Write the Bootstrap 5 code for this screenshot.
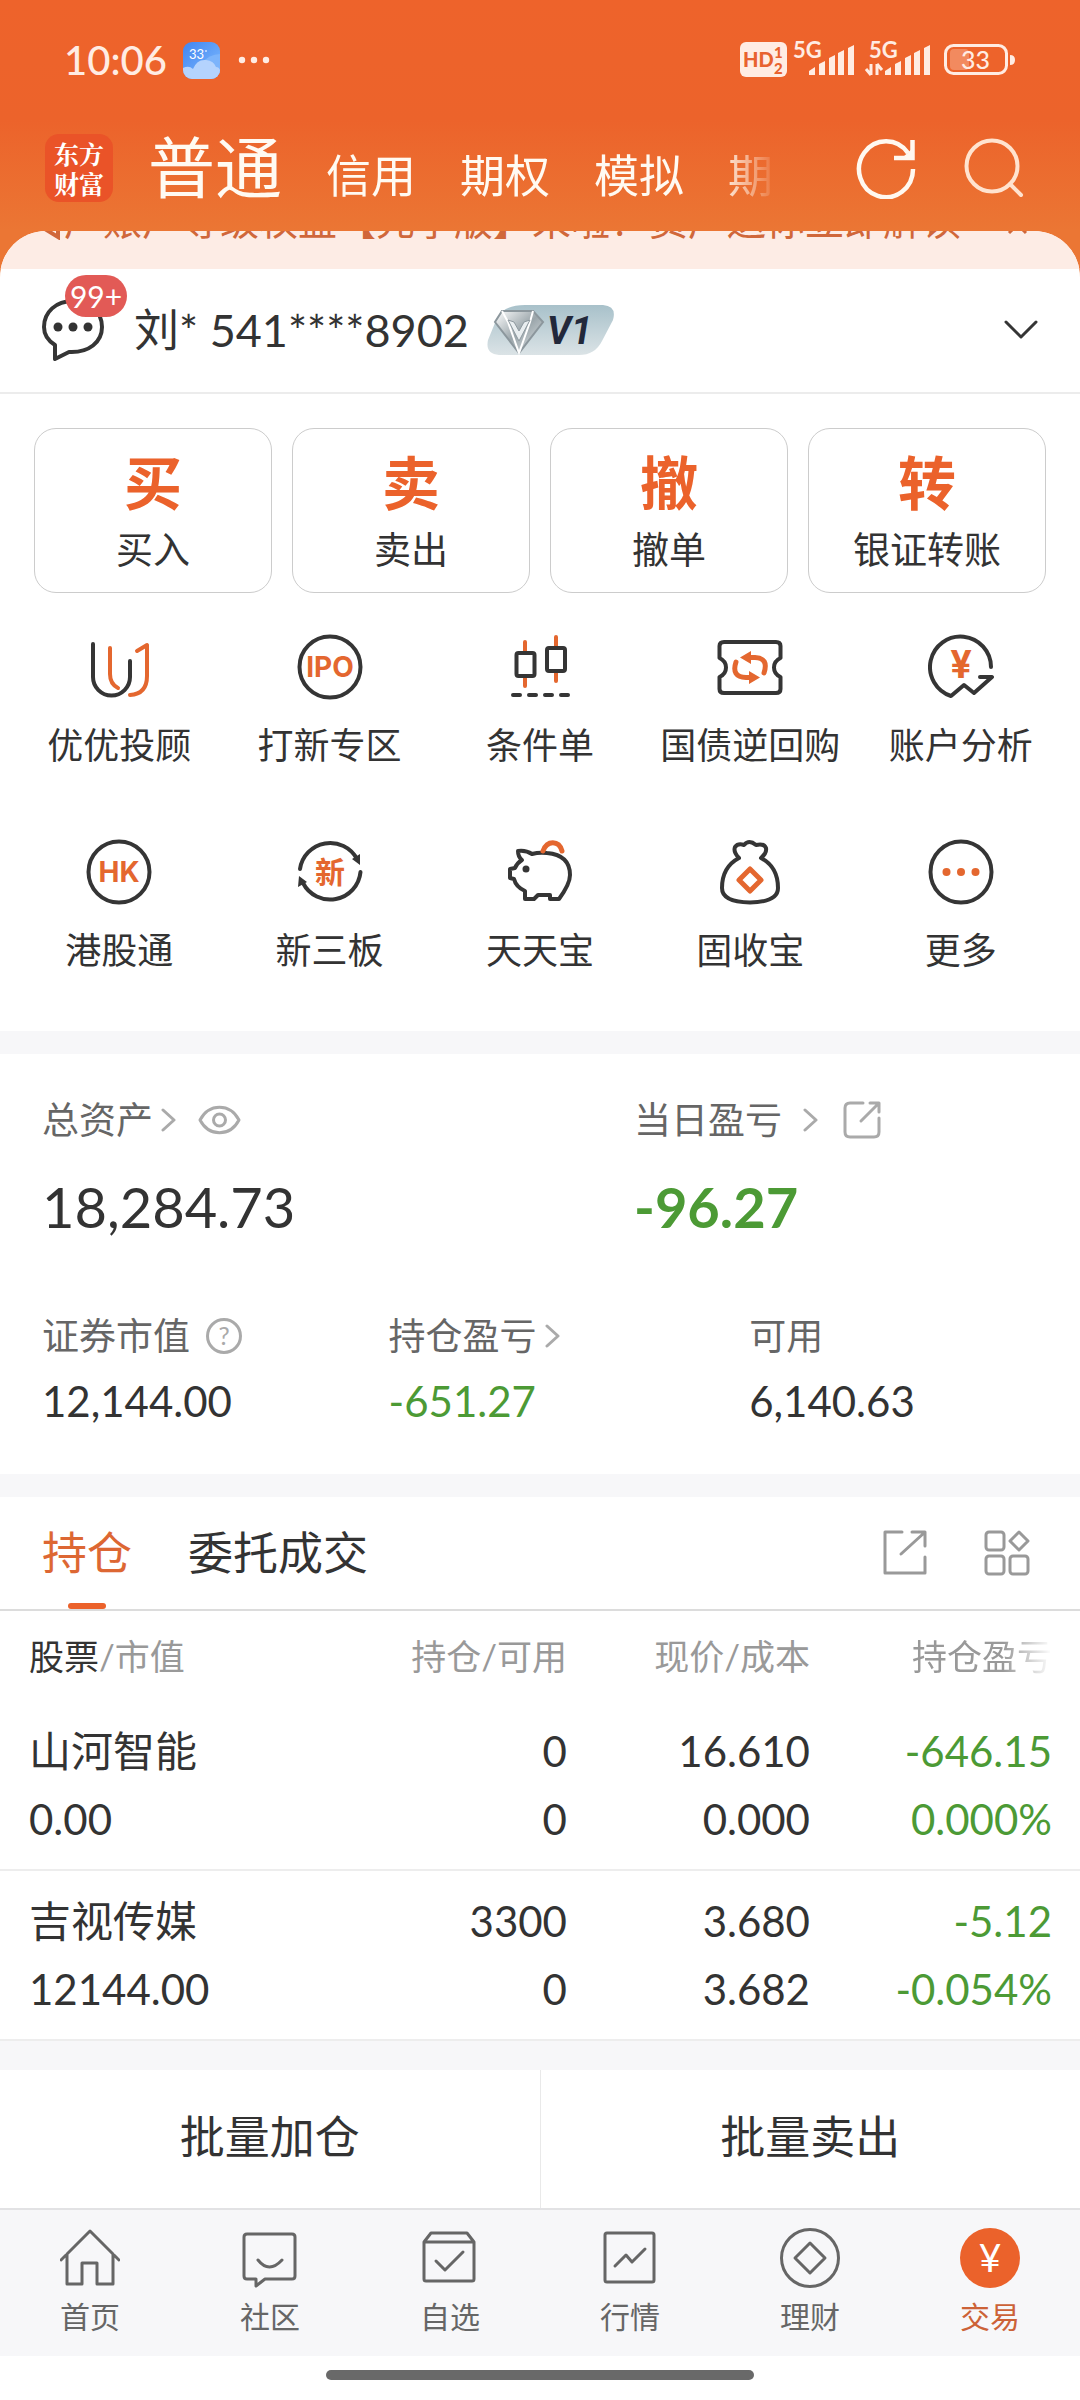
<!DOCTYPE html>
<html lang="zh-CN">
<head>
<meta charset="utf-8">
<meta name="viewport" content="width=device-width, initial-scale=1">
<title>交易</title>
<link href="https://cdn.jsdelivr.net/npm/bootstrap@5.3.0/dist/css/bootstrap.min.css" rel="stylesheet">
<style>
:root{--brand:#eb622b;--ink:#333;--sub:#666;--pale:#999;--down:#4c9a35;--strip:#f7f7f9}
body{font-family:Lato,"Noto Sans CJK SC",sans-serif;color:var(--ink);background:#fff}
svg{display:block;flex:none}
a{color:inherit;text-decoration:none}
button{color:inherit}
.btn-plain{border:0;background:none;padding:0}
.top-area{background:linear-gradient(#ee632b 0,#ec632b 120px,#eb7634 231px)}
.status-bar{height:120px;padding:0 64px;color:#ffece3}
.clock{font-size:40px;line-height:48px;font-weight:500}
.title-bar{height:111px;padding:0 56px 15px 45px}
.brand-mark{width:68px;height:68px;border-radius:14px;background:#ea5328;color:#fff;font:bold 25px/30px "Noto Serif CJK SC","Noto Sans CJK SC",serif;text-align:center}
.kinds{margin:0 83px 0 35px;padding-top:7px;gap:44px;overflow:hidden;white-space:nowrap;font-size:45px;line-height:80px;color:#fffaf2;width:0;-webkit-mask-image:linear-gradient(90deg,#000 570px,transparent 630px);mask-image:linear-gradient(90deg,#000 570px,transparent 630px)}
.kinds .on{font-size:67px}
.sheet{border-radius:46px 46px 0 0;overflow:hidden;background:#fff}
.notice{height:38px;background:#fdece5;color:#d0673a;padding:0 50px 0 36px;overflow:hidden;font-size:39px;line-height:40px;white-space:nowrap}
.notice>div{margin-top:-31px}
.account{height:125px;padding:0 42px 2px;border-bottom:2px solid #ececec}
.who{font-size:45px;line-height:60px}
.vip{margin-left:18px}
.msg-box{width:92px}
.msg-badge{left:23px;top:-24px;height:42px;width:62px;border-radius:21px;background:#e25a56;color:#fff;font-size:30px;line-height:42px;text-align:center}
.quick{padding:34px 34px 0;gap:20px}
.quick-card{height:165px;border:1px solid #ccc;border-radius:22px;background:#fff;padding:4px 0 0}
.quick-card b{display:block;font-size:58px;line-height:74px;color:var(--brand)}
.quick-card span{display:block;font-size:37px;line-height:60px}
.tools{padding:41px 14px 56px;row-gap:69px}
.tools a{height:136px;font-size:36px;line-height:50px;gap:20px;width:20%}
.strip{background:var(--strip);height:23px}
.assets{padding:36px 42px 0;height:420px}
.lbl{font-size:37px;line-height:60px;color:var(--sub);height:60px}
.after{margin-left:21px}
.big{font-size:56px;line-height:70px;margin-top:22px}
.side{padding-left:11px}
.mid{font-size:42px;line-height:60px;margin-top:5px}
.down{color:var(--down)}
.tabs{height:114px;padding:0 50px 0 42px;border-bottom:2px solid #dcdcdc;font-size:45px;line-height:112px;gap:56px}
.tabs .on{color:#dd6733;position:relative}
.tabs .on::after{content:"";position:absolute;left:50%;bottom:0;width:38px;height:6px;margin-left:-19px;border-radius:3px;background:var(--brand)}
.holdings{width:100%;table-layout:fixed;font-size:42px;line-height:68px}
.holdings th{font-size:35px;font-weight:400;color:var(--pale);height:90px;line-height:54px}
.holdings th b{font-weight:400;color:var(--ink)}
.holdings th,.holdings td{text-align:right;padding:0}
.holdings td{padding:16px 0;border-bottom:2px solid #ededed}
.holdings tr>:first-child{text-align:left;padding-left:29px}
.holdings tr>:last-child{padding-right:28px}
.fade-end{-webkit-mask-image:linear-gradient(90deg,#000 65%,transparent 100%);mask-image:linear-gradient(90deg,#000 65%,transparent 100%);display:inline-block}
.batch button{height:138px;font-size:45px;flex:1 1 0;padding-bottom:2px}
.batch button+button{border-left:1px solid #e9e9e9}
.tabbar{background:var(--strip);border-top:2px solid #e2e2e4;height:148px;padding-top:17px;color:var(--sub);font-size:30px;line-height:40px}
.tabbar a{flex:1 1 0;gap:7px}
.tabbar .on{color:#cc6237}
.home-ind{width:428px;height:10px;border-radius:5px;background:#696969;margin:14px auto 21px}
.ln{fill:none;stroke:#353535;stroke-width:4;stroke-linecap:round;stroke-linejoin:round}
.ln.thin{stroke-width:3}
.or{stroke:#e4672f}
.or.thick{stroke-width:5}
.gr{fill:none;stroke:#aaa;stroke-width:3;stroke-linecap:round;stroke-linejoin:round}
.gr.dark{stroke:#999}
.nv{fill:none;stroke:#666;stroke-width:3;stroke-linecap:round;stroke-linejoin:round}
.it{fill:#e4672f;font-weight:700;text-anchor:middle}
</style>
</head>
<body>
<div class="top-area">
  <div class="status-bar d-flex align-items-center">
    <span class="clock">10:06</span>
    <svg class="ms-3" width="37" height="37" viewBox="0 0 37 37"><defs><linearGradient id="sky" x1="0" y1="0" x2="1" y2="1"><stop stop-color="#4285f0"/><stop offset="1" stop-color="#7fbcff"/></linearGradient><clipPath id="wc"><rect width="37" height="37" rx="9"/></clipPath></defs><g clip-path="url(#wc)"><rect width="37" height="37" fill="url(#sky)"/><path d="M18 22Q26 12 37 12V37H18Z" fill="#7cb4fb"/><path d="M0 26Q6 23 10 27Q14 17 23 18Q31 19 33 25Q36 25 37 28V37H0Z" fill="#b4d3fd"/></g><text x="6" y="17" font-size="13" fill="#fff">33</text><circle cx="23" cy="9" r="1" fill="#cfe2ff"/></svg>
    <svg class="ms-3" width="36" height="10" viewBox="0 0 36 10" fill="#ffece3"><circle cx="6" cy="5" r="3.2"/><circle cx="18" cy="5" r="3.2"/><circle cx="30" cy="5" r="3.2"/></svg>
    <svg class="ms-auto" width="276" height="53" viewBox="0 -8 276 53" fill="#ffece3">
      <rect width="47" height="35" rx="6"/>
      <g fill="#e8622f" font-weight="900"><text x="3" y="25" font-size="20">HD</text><text x="34" y="16" font-size="15">1</text><text x="34" y="32" font-size="15">2</text></g>
      <g font-weight="700" font-size="22"><text x="53" y="16">5G</text><text x="129" y="16">5G</text></g>
      <path id="bars" d="M69 33v-4l6-4v8zM79 33V22l6-3v14zM89 33V16l6-3v20zM98 33V11l6-3v25zM108 33V6l6-3v30z"/>
      <use href="#bars" x="76"/>
      <path d="M131 22v11M126 27l5 6M137 33V22M142 28l-5-6" fill="none" stroke="#ffece3" stroke-width="3"/>
      <rect x="205.500" y="3.500" width="61" height="28" rx="8" fill="none" stroke="#ffece3" stroke-width="3"/>
      <rect x="210" y="7" width="19" height="21" rx="4" fill="#f28a5f"/>
      <path d="M270 13q5 0 5 5t-5 5z"/>
      <text x="221" y="27" font-size="25" font-weight="500">33</text>
    </svg>
  </div>
  <header class="title-bar d-flex align-items-center">
    <a href="#" class="brand-mark flex-shrink-0 d-flex flex-column justify-content-center"><span>东方</span><span>财富</span></a>
    <nav class="kinds d-flex align-items-baseline flex-grow-1">
      <a href="#" class="on">普通</a><a href="#">信用</a><a href="#">期权</a><a href="#">模拟</a><a href="#">期</a>
    </nav>
    <button class="btn-plain" aria-label="刷新"><svg width="60" height="62" viewBox="0 -1 60 62" fill="none" stroke="#fff8f0" stroke-width="4.500"><path d="M57 31A27 28 0 1 1 52 15"/><path d="M56.500 2V20H38"/><path d="M47 19L57 10V20Z" fill="#fff8f0" stroke="none"/></svg></button>
    <button class="btn-plain ms-5" aria-label="搜索"><svg width="60" height="60" viewBox="0 0 60 60" fill="none" stroke="#ffe3cf" stroke-width="4" stroke-linecap="round"><circle cx="28" cy="28" r="25.500"/><path d="M46 46L57 57"/></svg></button>
  </header>
  <div class="sheet">
    <div class="notice"><div class="d-flex align-items-center">
      <svg width="28" height="40" viewBox="0 0 28 40" fill="none" stroke="#d0673a" stroke-width="4"><path d="M4 14V26L22 37V4L4 14"/></svg>
      <span>产账户等级权益【先享版】来啦！资产送你立即解读</span>
      <svg class="ms-auto" width="24" height="40" viewBox="0 0 24 40" fill="none" stroke="#d0673a" stroke-width="3"><path d="M3 16L20 33M20 16L3 33"/></svg>
    </div></div>
    <div class="account d-flex align-items-center">
      <button class="btn-plain msg-box position-relative" aria-label="消息">
        <svg width="62" height="62" viewBox="0 0 62 62"><path class="ln" d="M13 46C5 41 2 35 2 28C2 13 14 2 31 2S60 13 60 28S47 54 27 53L13 60Z"/><g fill="#333"><circle cx="16" cy="28" r="4.500"/><circle cx="31" cy="28" r="4.500"/><circle cx="46" cy="28" r="4.500"/></g></svg>
        <span class="msg-badge position-absolute">99+</span>
      </button>
      <span class="who">刘* 541****8902</span>
      <svg class="vip" width="128" height="52" viewBox="0 0 128 52"><defs><linearGradient id="vb" x1="0" y1="0" x2="0" y2="1"><stop stop-color="#a8c1ca"/><stop offset="1" stop-color="#dbe3e6"/></linearGradient><linearGradient id="dm" x1="0" y1="0" x2="1" y2="1"><stop stop-color="#fff"/><stop offset=".5" stop-color="#9ba6ab"/><stop offset="1" stop-color="#e6eaec"/></linearGradient></defs><path d="M38 1H116Q130 2 126 16L115 37Q108 51 92 51H12Q-2 50 1 36L10 14Q17 1 38 1Z" fill="url(#vb)"/><path d="M15 7H46L56 18L32 49L8 18Z" fill="url(#dm)" stroke="#8c979d" stroke-width="2"/><path d="M15 7L21 18L32 49L43 18L46 7" fill="none" stroke="#fff" stroke-width="2"/><path d="M21 16L32 37L43 16L37 18L32 27L27 18Z" fill="#e9eef0" stroke="#8f9aa0"/><text x="60" y="40" font-size="38" font-weight="700" font-style="italic" fill="#22283a" font-family="Roboto,sans-serif">V1</text></svg>
      <button class="btn-plain ms-auto" aria-label="展开"><svg width="34" height="20" viewBox="0 0 34 20"><path class="ln thin" d="M2 2L17 17L32 2"/></svg></button>
    </div>
  </div>
</div>

<section class="quick d-flex">
  <button class="quick-card flex-fill w-25"><b>买</b><span>买入</span></button>
  <button class="quick-card flex-fill w-25"><b>卖</b><span>卖出</span></button>
  <button class="quick-card flex-fill w-25"><b>撤</b><span>撤单</span></button>
  <button class="quick-card flex-fill w-25"><b>转</b><span>银证转账</span></button>
</section>

<section class="tools d-flex flex-wrap">
  <a href="#" class="d-flex flex-column align-items-center"><svg width="66" height="66" viewBox="0 0 66 66"><g class="ln"><path d="M7 10V43A18.500 18.500 0 0 0 44 43V27"/><path class="or" d="M24 14V40Q24 50 32 54M51 17L61 11V42Q61 60 44 61"/></g></svg>优优投顾</a>
  <a href="#" class="d-flex flex-column align-items-center"><svg width="66" height="66" viewBox="0 0 66 66"><circle class="ln" cx="33" cy="33" r="30.500"/><text class="it" x="33" y="43" font-size="28" font-family="Inter,sans-serif">IPO</text></svg>打新专区</a>
  <a href="#" class="d-flex flex-column align-items-center"><svg width="66" height="66" viewBox="0 0 66 66"><g class="ln"><path class="or" d="M18 8V18M18 43V52M49 3V13M49 37V47"/><rect x="9.500" y="19" width="18" height="23" rx="2"/><rect x="40" y="14" width="18" height="23" rx="2"/><path d="M6 61H13M22 61H29M38 61H45M54 61H61"/></g></svg>条件单</a>
  <a href="#" class="d-flex flex-column align-items-center"><svg width="66" height="66" viewBox="0 0 66 66"><g class="ln"><path d="M7 8H59Q63.500 8 63.500 12V24Q57 27 57 33.500T63.500 43V55Q63.500 59 59 59H7Q2.500 59 2.500 55V43Q9 40 9 33.500T2.500 24V12Q2.500 8 7 8Z"/><path class="or thick" d="M19 28Q14 43 29 43.500H33M47 39Q52 24 38 23.500H33"/></g><path d="M23 23.500L34 17V30ZM43 43.500L32 37V50Z" fill="#e4672f"/></svg>国债逆回购</a>
  <a href="#" class="d-flex flex-column align-items-center"><svg width="66" height="66" viewBox="0 0 66 66"><path class="ln" d="M63 33A30.500 30.500 0 1 0 23 62L36 51L46 59L64 43H52"/><text class="it" x="33" y="44" font-size="38" font-family="Inter,sans-serif">¥</text></svg>账户分析</a>
  <a href="#" class="d-flex flex-column align-items-center"><svg width="66" height="66" viewBox="0 0 66 66"><circle class="ln" cx="33" cy="33" r="30.500"/><text class="it" x="33" y="43" font-size="28" font-family="Inter,sans-serif">HK</text></svg>港股通</a>
  <a href="#" class="d-flex flex-column align-items-center"><svg width="66" height="66" viewBox="0 0 66 66"><path class="ln" d="M3 30A30.500 30.500 0 0 1 60 20M63.500 33A30.500 30.500 0 0 1 6 44"/><path d="M55 20L63 15V26ZM2 37L10 43L1 48Z" fill="#353535"/><text class="it" x="33" y="44" font-size="30">新</text></svg>新三板</a>
  <a href="#" class="d-flex flex-column align-items-center"><svg width="66" height="66" viewBox="0 0 66 66"><g class="ln"><path d="M11 12Q19 11 25 15Q32 13 40 14Q63 16 63 36Q63 45 52 60H43V56H31L27 60H18V52Q9 48 7 40L3 39V30L8 29Q10 24 15 21Q11 18 11 12Z"/><path class="or thick" d="M36 12C40 1 52 1 55 12"/></g><circle cx="19" cy="30" r="3.500" fill="#353535"/></svg>天天宝</a>
  <a href="#" class="d-flex flex-column align-items-center"><svg width="66" height="66" viewBox="0 0 66 66"><g class="ln"><path d="M22 19Q16 13 18 8Q21 4 27 6Q32 0 39 6Q47 4 49 9Q50 14 44 19Q61 28 61 49Q61 63 33 63.500Q5 63 5 49Q5 28 22 19Z"/><path class="or thick" d="M33 30L44 41L33 52L22 41Z"/></g></svg>固收宝</a>
  <a href="#" class="d-flex flex-column align-items-center"><svg width="66" height="66" viewBox="0 0 66 66"><circle class="ln" cx="33" cy="33" r="30.500"/><g fill="#e4672f"><circle cx="18.500" cy="33" r="4"/><circle cx="33" cy="33" r="4"/><circle cx="47.500" cy="33" r="4"/></g></svg>更多</a>
</section>
<div class="strip"></div>

<section class="assets">
  <div class="row g-0">
    <div class="col-7">
      <div class="lbl d-flex align-items-center">总资产<svg class="ms-2" width="16" height="24" viewBox="0 0 16 24"><path class="gr" d="M2 2L13 12L2 22"/></svg>
        <button class="btn-plain after" aria-label="隐藏金额"><svg width="43" height="30" viewBox="0 0 43 30"><path class="gr" d="M2 15C11-2 32-2 41 15C32 32 11 32 2 15Z"/><circle class="gr" cx="21.500" cy="15" r="6"/></svg></button></div>
      <div class="big">18,284.73</div>
    </div>
    <div class="col-5 side">
      <div class="lbl d-flex align-items-center">当日盈亏<svg class="after" width="16" height="24" viewBox="0 0 16 24"><path class="gr" d="M2 2L13 12L2 22"/></svg>
        <a href="#" class="ms-4" aria-label="分享"><svg width="38" height="38" viewBox="0 0 38 38"><path class="gr" d="M20 2H7Q2 2 2 7V31Q2 36 7 36H31Q36 36 36 31V17M18 20L35 3M27 2H36V11"/></svg></a></div>
      <div class="big down fw-bold">-96.27</div>
    </div>
  </div>
  <div class="d-flex pt-5 mt-3">
    <div style="width:34.800%"><div class="lbl d-flex align-items-center">证券市值<svg class="ms-3" width="36" height="36" viewBox="0 0 36 36"><circle class="gr" cx="18" cy="18" r="16.500"/><text x="18" y="27" font-size="25" text-anchor="middle" fill="#aaa">?</text></svg></div><div class="mid">12,144.00</div></div>
    <div style="width:36.200%"><div class="lbl d-flex align-items-center">持仓盈亏<svg class="ms-2" width="16" height="24" viewBox="0 0 16 24"><path class="gr" d="M2 2L13 12L2 22"/></svg></div><div class="mid down">-651.27</div></div>
    <div><div class="lbl">可用</div><div class="mid">6,140.63</div></div>
  </div>
</section>
<div class="strip"></div>

<section>
  <div class="tabs d-flex align-items-center">
    <a href="#" class="on">持仓</a><a href="#">委托成交</a>
    <a href="#" class="ms-auto" aria-label="分享"><svg width="46" height="46" viewBox="0 0 46 46"><path class="gr dark" d="M20 2H3V43H43V27M19 24L42 3M30 2H43V16"/></svg></a>
    <a href="#" aria-label="布局"><svg width="46" height="46" viewBox="0 0 46 46"><g class="gr dark"><rect x="2" y="2" width="18" height="18" rx="3"/><rect x="2" y="26" width="18" height="18" rx="3"/><rect x="26" y="26" width="18" height="18" rx="3"/><path d="M35 2L44 11L35 20L26 11Z"/></g></svg></a>
  </div>
  <table class="holdings">
    <colgroup><col style="width:29%"><col style="width:23.500%"><col style="width:22.500%"><col style="width:25%"></colgroup>
    <thead><tr><th><b>股票</b>/市值</th><th>持仓/可用</th><th>现价/成本</th><th><span class="fade-end">持仓盈亏</span></th></tr></thead>
    <tbody>
      <tr><td>山河智能<br>0.00</td><td>0<br>0</td><td>16.610<br>0.000</td><td class="down">-646.15<br>0.000%</td></tr>
      <tr><td>吉视传媒<br>12144.00</td><td>3300<br>0</td><td>3.680<br>3.682</td><td class="down">-5.12<br>-0.054%</td></tr>
    </tbody>
  </table>
</section>
<div class="strip" style="height:29px"></div>
<div class="batch d-flex"><button class="btn-plain">批量加仓</button><button class="btn-plain">批量卖出</button></div>

<nav class="tabbar d-flex">
  <a href="#" class="d-flex flex-column align-items-center"><svg width="60" height="62" viewBox="0 0 60 62"><path class="nv" d="M1 33L30 4L59 33M7 27V57H22V36H37V57H53V27"/></svg>首页</a>
  <a href="#" class="d-flex flex-column align-items-center"><svg width="60" height="62" viewBox="0 0 60 62"><path class="nv" d="M7 7H52Q55 7 55 10V49Q55 52 52 52H25L16 59V52H7Q4 52 4 49V10Q4 7 7 7ZM18 33Q29 47 42 33"/></svg>社区</a>
  <a href="#" class="d-flex flex-column align-items-center"><svg width="60" height="62" viewBox="0 0 60 62"><path class="nv" d="M4 15L11 6H47L54 15V52Q54 54 52 54H6Q4 54 4 52ZM4 15H54M16 34L25 43L43 25"/></svg>自选</a>
  <a href="#" class="d-flex flex-column align-items-center"><svg width="60" height="62" viewBox="0 0 60 62"><rect class="nv" x="5" y="6" width="49" height="49" rx="2"/><path class="nv" d="M15 39L26 28L32 35L45 22"/></svg>行情</a>
  <a href="#" class="d-flex flex-column align-items-center"><svg width="60" height="62" viewBox="0 0 60 62"><circle class="nv" cx="30" cy="31" r="28.500"/><path class="nv" d="M30 16L45 31L30 46L15 31Z"/></svg>理财</a>
  <a href="#" class="d-flex flex-column align-items-center on"><svg width="60" height="62" viewBox="0 0 60 62"><circle cx="30" cy="31" r="30" fill="#eb622b"/><text x="30" y="45" font-size="39" text-anchor="middle" fill="#fff">¥</text></svg>交易</a>
</nav>
<div class="home-ind"></div>
<script src="https://cdn.jsdelivr.net/npm/bootstrap@5.3.0/dist/js/bootstrap.bundle.min.js"></script>
</body>
</html>
